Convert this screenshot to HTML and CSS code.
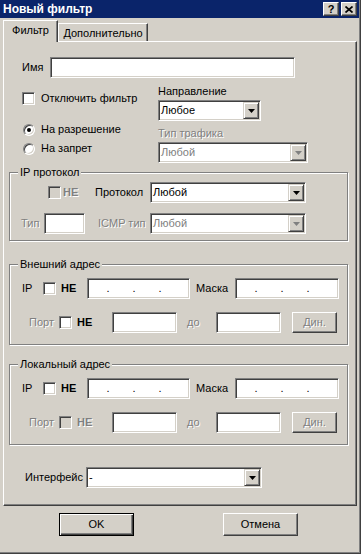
FILE: index.html
```html
<!DOCTYPE html>
<html lang="ru">
<head>
    <meta charset="UTF-8">
    <title>Новый фильтр</title>
    <link rel="stylesheet" href="styles.css">
</head>
<body>

<div class="window">

    <div class="titlebar">
        <span class="title">Новый фильтр</span>
        <div class="caption-buttons">
            <span class="caption-btn">?</span>
            <span class="caption-btn">
                <svg width="8" height="7" viewBox="0 0 8 7"><path d="M0.5 0.5L7.5 6.5M7.5 0.5L0.5 6.5" stroke="#000" stroke-width="1.7"/></svg>
            </span>
        </div>
    </div>

    <div class="tabs">
        <div class="tab active">Фильтр</div>
        <div class="tab">Дополнительно</div>
    </div>

    <div class="panel">

        <div class="name-row">
            <span class="cell name-label">Имя</span>
            <span class="edit name-edit"></span>
        </div>

        <div class="options">
            <div class="mode-col">
                <div class="choice check-choice"><span class="check"></span>Отключить фильтр</div>
                <div class="choice allow"><span class="radio on"></span>На разрешение</div>
                <div class="choice deny"><span class="radio"></span>На запрет</div>
            </div>
            <div class="dir-col">
                <div class="caption">Направление</div>
                <div class="combo dir-combo">
                    <span class="combo-text">Любое</span>
                    <span class="drop"><svg width="7" height="4" viewBox="0 0 7 4"><path d="M0 0h7L3.5 4z"/></svg></span>
                </div>
                <div class="caption off traffic-caption">Тип трафика</div>
                <div class="combo off traffic-combo">
                    <span class="combo-text">Любой</span>
                    <span class="drop"><svg width="7" height="4" viewBox="0 0 7 4"><path d="M0 0h7L3.5 4z"/></svg></span>
                </div>
            </div>
        </div>

        <fieldset class="group proto-group">
            <legend>IP протокол</legend>
            <div class="row proto-row">
                <span class="check off proto-check"></span>
                <span class="cell bold off ne-proto">НЕ</span>
                <span class="cell proto-label">Протокол</span>
                <div class="combo proto-combo">
                    <span class="combo-text">Любой</span>
                    <span class="drop"><svg width="7" height="4" viewBox="0 0 7 4"><path d="M0 0h7L3.5 4z"/></svg></span>
                </div>
            </div>
            <div class="row icmp-row">
                <span class="cell off type-label">Тип</span>
                <span class="edit type-edit"></span>
                <span class="cell off icmp-label">ICMP тип</span>
                <div class="combo off proto-combo">
                    <span class="combo-text">Любой</span>
                    <span class="drop"><svg width="7" height="4" viewBox="0 0 7 4"><path d="M0 0h7L3.5 4z"/></svg></span>
                </div>
            </div>
        </fieldset>

        <fieldset class="group addr-group remote">
            <legend>Внешний адрес</legend>
            <div class="row ip-row">
                <span class="cell ip-label">IP</span>
                <span class="check"></span>
                <span class="cell bold ne-ip">НЕ</span>
                <span class="edit ip-edit"><span>.</span><span>.</span><span>.</span></span>
                <span class="cell mask-label">Маска</span>
                <span class="edit ip-edit mask-edit"><span>.</span><span>.</span><span>.</span></span>
            </div>
            <div class="row port-row">
                <span class="cell off port-label">Порт</span>
                <span class="check"></span>
                <span class="cell bold ne-port">НЕ</span>
                <span class="edit port-edit"></span>
                <span class="cell off to-label">до</span>
                <span class="edit port-edit"></span>
                <span class="btn off dyn-btn">Дин.</span>
            </div>
        </fieldset>

        <fieldset class="group addr-group local">
            <legend>Локальный адрес</legend>
            <div class="row ip-row">
                <span class="cell ip-label">IP</span>
                <span class="check"></span>
                <span class="cell bold ne-ip">НЕ</span>
                <span class="edit ip-edit"><span>.</span><span>.</span><span>.</span></span>
                <span class="cell mask-label">Маска</span>
                <span class="edit ip-edit mask-edit"><span>.</span><span>.</span><span>.</span></span>
            </div>
            <div class="row port-row">
                <span class="cell off port-label">Порт</span>
                <span class="check off"></span>
                <span class="cell bold off ne-port">НЕ</span>
                <span class="edit port-edit"></span>
                <span class="cell off to-label">до</span>
                <span class="edit port-edit"></span>
                <span class="btn off dyn-btn">Дин.</span>
            </div>
        </fieldset>

        <div class="row iface-row">
            <span class="cell iface-label">Интерфейс</span>
            <div class="combo iface-combo">
                <span class="combo-text">-</span>
                <span class="drop"><svg width="7" height="4" viewBox="0 0 7 4"><path d="M0 0h7L3.5 4z"/></svg></span>
            </div>
        </div>

    </div>

    <div class="dialog-buttons">
        <span class="btn default">OK</span>
        <span class="btn">Отмена</span>
    </div>

</div>

</body>
</html>
```

FILE: styles.css
```css
* {
    box-sizing: border-box;
}

body {
    margin: 0;
    background: #d4d0c8;
    font-family: "Liberation Sans", Arial, sans-serif;
    font-size: 11px;
    line-height: 13px;
    color: #000;
}

.window {
    width: 361px;
    height: 554px;
    padding: 0 1px 1px 0;
    background: #d4d0c8;
    border-right: 1px solid #404040;
    border-bottom: 1px solid #404040;
    box-shadow: inset -1px -1px #808080;
}

/* title bar */

.titlebar {
    height: 18px;
    display: flex;
    align-items: center;
    justify-content: space-between;
    padding: 0 2px 0 3px;
    background: #0a246a;
}

.title {
    color: #fff;
    font-weight: bold;
    font-size: 12px;
}

.caption-buttons {
    display: flex;
    gap: 2px;
}

.caption-btn {
    width: 16px;
    height: 14px;
    display: flex;
    align-items: center;
    justify-content: center;
    background: #d4d0c8;
    border: 1px solid;
    border-color: #fff #404040 #404040 #fff;
    box-shadow: inset -1px -1px #808080;
    font-weight: bold;
    font-size: 11px;
}

/* tabs */

.tabs {
    height: 23px;
    display: flex;
    align-items: flex-end;
    padding-left: 3px;
}

.tab {
    width: 90px;
    height: 18px;
    padding-top: 3px;
    text-align: center;
    background: #d4d0c8;
    border: 1px solid;
    border-bottom: 0;
    border-color: #fff #404040 transparent #fff;
    box-shadow: inset -1px 0 #808080;
}

.tab.active {
    position: relative;
    width: 55px;
    height: 22px;
    margin-bottom: -1px;
}

.panel {
    width: 354px;
    height: 465px;
    margin-left: 3px;
    border: 1px solid;
    border-color: #fff #404040 #404040 #fff;
    box-shadow: inset -1px -1px #808080;
}

/* common controls */

.cell {
    flex-shrink: 0;
    white-space: nowrap;
}

.bold {
    font-weight: bold;
}

.off {
    color: #808080;
    text-shadow: 1px 1px #fff;
}

.edit,
.combo {
    height: 21px;
    flex-shrink: 0;
    background: #fff;
    border: 1px solid;
    border-color: #808080 #fff #fff #808080;
    box-shadow: inset 1px 1px #404040, inset -1px -1px #d4d0c8;
}

.combo {
    display: flex;
    align-items: center;
    padding: 1px;
}

.combo-text {
    flex: 1;
    padding-left: 1px;
}

.drop {
    width: 16px;
    height: 17px;
    display: flex;
    align-items: center;
    justify-content: center;
    background: #d4d0c8;
    border: 1px solid;
    border-color: #d4d0c8 #404040 #404040 #d4d0c8;
    box-shadow: inset 1px 1px #fff, inset -1px -1px #808080;
}

.drop svg {
    fill: #000;
}

.combo.off .drop svg {
    fill: #808080;
}

.check {
    width: 13px;
    height: 13px;
    flex-shrink: 0;
    background: #fff;
    border: 1px solid;
    border-color: #808080 #fff #fff #808080;
    box-shadow: inset 1px 1px #404040, inset -1px -1px #d4d0c8;
}

.check.off {
    background: #d4d0c8;
}

.radio {
    width: 12px;
    height: 12px;
    flex-shrink: 0;
    display: flex;
    align-items: center;
    justify-content: center;
    border-radius: 50%;
    background: #fff;
    border: 1px solid;
    border-color: #808080 #fff #fff #808080;
    box-shadow: inset 1px 1px #404040, inset -1px -1px #d4d0c8;
}

.radio.on::after {
    content: "";
    width: 4px;
    height: 4px;
    border-radius: 50%;
    background: #000;
}

.btn {
    width: 75px;
    height: 23px;
    display: flex;
    align-items: center;
    justify-content: center;
    flex-shrink: 0;
    background: #d4d0c8;
    border: 1px solid;
    border-color: #fff #404040 #404040 #fff;
    box-shadow: inset -1px -1px #808080;
}

.btn.default {
    border-color: #000;
    box-shadow: inset 1px 1px #fff, inset -1px -1px #404040, inset -2px -2px #808080;
}

/* name and mode */

.name-row {
    display: flex;
    align-items: center;
    height: 21px;
    margin-top: 15px;
    padding-left: 18px;
}

.name-label {
    width: 28px;
}

.name-edit {
    width: 245px;
}

.options {
    display: flex;
    margin-top: 7px;
    padding-left: 18px;
}

.mode-col {
    width: 136px;
}

.choice {
    display: flex;
    align-items: center;
    gap: 6px;
    height: 13px;
}

.check-choice {
    margin-top: 7px;
}

.allow {
    margin-top: 18px;
}

.deny {
    margin-top: 6px;
}

.choice .radio {
    margin-left: 1px;
}

.caption {
    height: 13px;
}

.dir-col .combo {
    margin-top: 2px;
}

.traffic-caption {
    margin-top: 6px;
}

.dir-combo {
    width: 103px;
}

.traffic-combo {
    width: 150px;
}

/* groups */

.group {
    width: 339px;
    min-inline-size: 0;
    margin: 0 0 0 5px;
    padding: 0;
    border: 1px solid #808080;
    box-shadow: inset 1px 1px #fff, 1px 1px #fff;
}

.group legend {
    margin-left: 8px;
    padding: 0 2px;
    background: #d4d0c8;
}

.row {
    display: flex;
    align-items: center;
    height: 21px;
}

.proto-group {
    margin-top: 3px;
    padding-bottom: 6px;
}

.proto-row {
    margin-top: 3px;
}

.proto-check {
    margin-left: 38px;
}

.ne-proto {
    width: 32px;
    margin-left: 2px;
}

.proto-label {
    width: 55px;
}

.proto-combo {
    width: 156px;
}

.icmp-row {
    margin-top: 10px;
}

.type-label {
    width: 23px;
    margin-left: 11px;
}

.type-edit {
    width: 41px;
}

.icmp-label {
    width: 52px;
    margin-left: 13px;
}

.addr-group {
    padding-bottom: 11px;
}

.remote {
    margin-top: 17px;
}

.local {
    margin-top: 13px;
}

.ip-row {
    margin-top: 7px;
}

.ip-label {
    width: 21px;
    margin-left: 12px;
}

.ne-ip {
    width: 26px;
    margin-left: 5px;
}

.ip-edit {
    width: 103px;
    display: flex;
    align-items: center;
    padding-left: 7px;
}

.ip-edit span {
    width: 26px;
    text-align: center;
}

.mask-label {
    width: 39px;
    margin-left: 6px;
}

.mask-edit {
    width: 104px;
}

.port-row {
    margin-top: 13px;
}

.port-label {
    width: 30px;
    margin-left: 19px;
}

.ne-port {
    width: 35px;
    margin-left: 5px;
}

.port-edit {
    width: 65px;
}

.to-label {
    width: 29px;
    margin-left: 10px;
}

.dyn-btn {
    width: 45px;
    height: 21px;
    margin-left: 11px;
}

.iface-row {
    margin-top: 22px;
    padding-left: 21px;
}

.iface-label {
    width: 61px;
}

.iface-combo {
    width: 176px;
}

/* bottom buttons */

.dialog-buttons {
    display: flex;
    gap: 89px;
    margin-top: 7px;
    padding-left: 59px;
}
```
